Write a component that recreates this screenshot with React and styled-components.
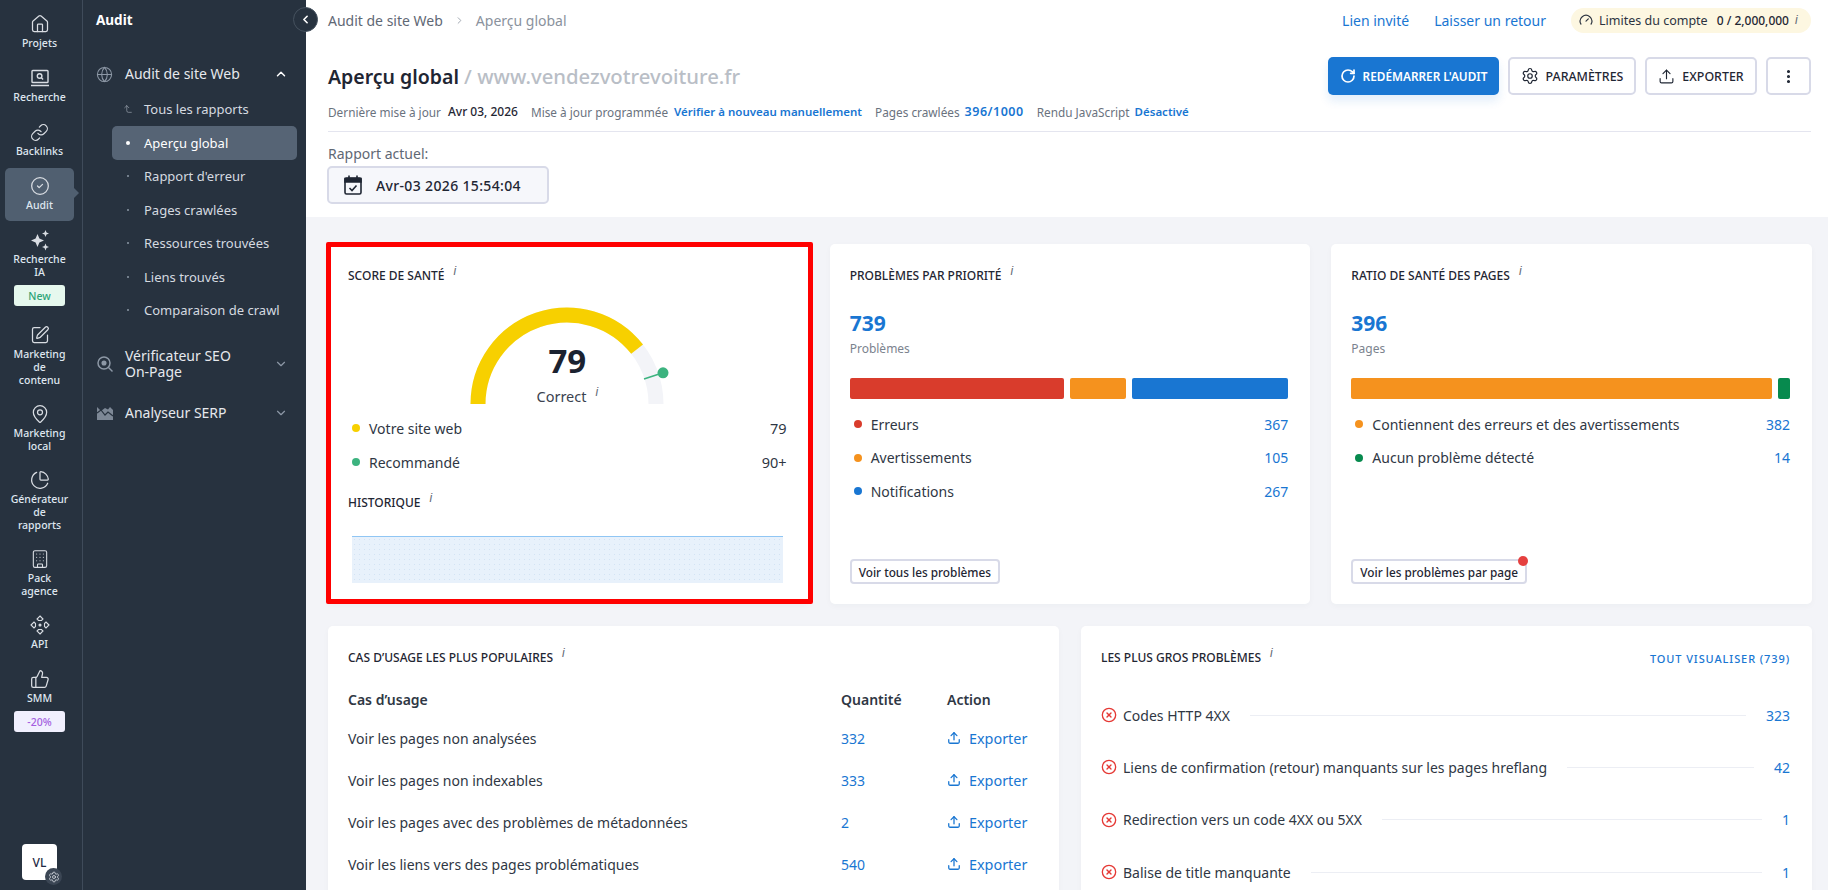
import React from "react";
import styled, { createGlobalStyle } from "styled-components";
import {
  House,
  Link,
  CircleCheck,
  SquarePen,
  MapPin,
  ChartPie,
  Building,
  ThumbsUp,
  Settings,
  Globe,
  ChevronUp,
  ChevronDown,
  ChevronLeft,
  ChevronRight,
  CornerLeftUp,
  Gauge,
  RotateCw,
  Upload,
  EllipsisVertical,
  CircleX,
} from "lucide-react";

const GlobalStyle = createGlobalStyle`
  html, body {
    margin: 0;
    padding: 0;
    height: 890px;
    overflow: hidden;
    background: #f3f4f8;
    font-family: "Noto Sans", "Liberation Sans", sans-serif;
    color: #1f2633;
  }
  * { box-sizing: border-box; }
`;

const Page = styled.div`
  display: flex;
  width: 1828px;
  height: 890px;
  overflow: hidden;
`;

const Rail = styled.nav`
  flex: 0 0 83px;
  display: flex;
  flex-direction: column;
  align-items: flex-start;
  gap: 1px;
  padding: 6px 0 10px 5px;
  background: #27323f;
  border-right: 1px solid #3f4b5a;
`;
const RailItem = styled.div`
  position: relative;
  width: 69px;
  min-height: 53px;
  display: flex;
  flex-direction: column;
  align-items: center;
  padding: 7px 0 8px;
  border-radius: 5px;
  background: ${(p) => (p.$active ? "#505f70" : "transparent")};
  color: #d9dde3;
  ${(p) =>
    p.$active &&
    `&::after {
      content: "";
      position: absolute;
      right: -5px;
      top: 20px;
      border-left: 5px solid #505f70;
      border-top: 5px solid transparent;
      border-bottom: 5px solid transparent;
    }`}
`;
const RailIcon = styled.span`
  height: 22px;
  display: flex;
  align-items: center;
  justify-content: center;
`;
const RailLabel = styled.span`
  margin-top: 2px;
  font-size: 10.5px;
  font-weight: 500;
  line-height: 13px;
  text-align: center;
  color: #dfe6ef;
  white-space: pre-line;
`;
const RailBadge = styled.span`
  width: 51px;
  height: 21px;
  margin-top: 6px;
  margin-bottom: 2px;
  display: flex;
  align-items: center;
  justify-content: center;
  border-radius: 3px;
  font-size: 10.5px;
  font-weight: 500;
  background: ${(p) => (p.$tone === "green" ? "#e6f8ee" : "#f1f0fe")};
  color: ${(p) => (p.$tone === "green" ? "#2fa577" : "#a35ee0")};
`;
const Avatar = styled.div`
  position: relative;
  width: 35px;
  height: 36px;
  margin-top: auto;
  margin-left: 17px;
  display: flex;
  align-items: center;
  justify-content: center;
  border-radius: 4px;
  background: #fff;
  color: #1f2b45;
  font-size: 12px;
  font-weight: 500;
`;
const AvatarGear = styled.span`
  position: absolute;
  right: -5px;
  bottom: -5px;
  width: 17px;
  height: 17px;
  display: flex;
  align-items: center;
  justify-content: center;
  border-radius: 50%;
  background: #3b4654;
  color: #d9dde3;
`;

const SubNav = styled.aside`
  position: relative;
  flex: 0 0 223px;
  display: flex;
  flex-direction: column;
  padding: 0 9px 0 13px;
  background: #27323f;
  color: #dfe3e8;
`;
const SubTitle = styled.div`
  height: 40px;
  display: flex;
  align-items: center;
  font-size: 13.5px;
  font-weight: 700;
  color: #fff;
`;
const CollapseButton = styled.button`
  position: absolute;
  top: 7px;
  right: -12px;
  width: 25px;
  height: 25px;
  padding: 0;
  display: flex;
  align-items: center;
  justify-content: center;
  border: 1px solid #46525f;
  border-radius: 50%;
  background: #27323f;
  color: #fff;
  z-index: 2;
`;
const SectionHead = styled.div`
  display: flex;
  align-items: center;
  min-height: ${(p) => p.$h || 34}px;
  margin-top: ${(p) => p.$mt || 0}px;
  font-size: 14px;
  font-weight: 400;
  line-height: 16px;
  color: #e6e9ed;
`;
const SectionIcon = styled.span`
  flex: 0 0 29px;
  display: flex;
  color: #8d98a6;
`;
const SectionLabel = styled.span`
  flex: 1;
`;
const SectionChevron = styled.span`
  display: flex;
  margin-right: 9px;
  color: ${(p) => (p.$open ? "#fff" : "#8d98a6")};
`;
const SubList = styled.div`
  display: flex;
  flex-direction: column;
  margin-top: 1px;
  margin-left: 16px;
`;
const SubItem = styled.div`
  height: ${(p) => (p.$active ? 34 : 33.5)}px;
  display: flex;
  align-items: center;
  border-radius: 5px;
  background: ${(p) => (p.$active ? "#566475" : "transparent")};
  color: ${(p) => (p.$active ? "#fff" : "#d5dae0")};
  font-size: 13px;
`;
const SubMark = styled.span`
  flex: 0 0 32px;
  display: flex;
  justify-content: center;
  color: #a5adb8;
`;
const SubDot = styled.i`
  width: ${(p) => (p.$active ? 4 : 2)}px;
  height: ${(p) => (p.$active ? 4 : 2)}px;
  border-radius: 50%;
  background: ${(p) => (p.$active ? "#fff" : "#8d98a6")};
`;

const Main = styled.main`
  flex: 1;
  min-width: 0;
  display: flex;
  flex-direction: column;
`;
const Header = styled.header`
  padding: 0 17px 13px 22px;
  background: #fff;
`;
const TopBar = styled.div`
  height: 40px;
  display: flex;
  align-items: center;
  justify-content: space-between;
`;
const Crumbs = styled.div`
  display: flex;
  align-items: center;
  gap: 11px;
  font-size: 14px;
  color: #5f6875;
`;
const CrumbCurrent = styled.span`
  color: #8a929d;
`;
const TopLinks = styled.div`
  display: flex;
  align-items: center;
  gap: 25px;
`;
const TopLink = styled.a`
  color: #1976d2;
  font-size: 14px;
`;
const LimitPill = styled.div`
  width: 240px;
  height: 25px;
  display: flex;
  align-items: center;
  gap: 6px;
  padding: 0 0 0 8px;
  border-radius: 13px;
  background: #fdf7e1;
  font-size: 12.5px;
  color: #2c333f;
`;
const LimitValue = styled.span`
  margin-left: 3px;
  font-size: 12px;
  font-weight: 500;
  color: #1f2633;
`;
const InfoMark = styled.sup`
  font-family: "Liberation Sans", sans-serif;
  font-style: italic;
  font-size: 12px;
  font-weight: 400;
  line-height: 0;
  text-transform: none;
  margin-left: ${(p) => p.$ml ?? 9}px;
  color: #5f6875;
`;
const TitleRow = styled.div`
  height: 38px;
  margin-top: 17px;
  display: flex;
  align-items: center;
  justify-content: space-between;
`;
const PageTitle = styled.h1`
  margin: 0;
  font-size: 19.5px;
  font-weight: 600;
  color: #1f2633;
`;
const TitleSite = styled.span`
  font-size: 20.3px;
  font-weight: 500;
  color: #b9bec6;
`;
const Actions = styled.div`
  display: flex;
  gap: 9px;
`;
const ActionButton = styled.button`
  width: ${(p) => p.$w}px;
  height: 38px;
  display: flex;
  align-items: center;
  justify-content: center;
  gap: 7px;
  padding: 0;
  border-radius: 5px;
  border: ${(p) => (p.$primary ? "none" : "2px solid #d8dae8")};
  background: ${(p) => (p.$primary ? "#1976d2" : "#fff")};
  color: ${(p) => (p.$primary ? "#fff" : "#1f2633")};
  box-shadow: ${(p) => (p.$primary ? "0 6px 10px rgba(25,118,210,.12)" : "none")};
  font-family: inherit;
  font-size: ${(p) => (p.$primary ? 11.8 : 12.4)}px;
  font-weight: ${(p) => (p.$primary ? 600 : 500)};
`;
const MetaRow = styled.div`
  height: 29px;
  margin-top: 8px;
  display: flex;
  align-items: flex-start;
  font-size: 11.8px;
  line-height: 18px;
  border-bottom: 1px solid #e4e5ef;
  color: #6a727e;
`;
const MetaLabel = styled.span`
  margin-left: ${(p) => p.$ml || 0}px;
  margin-right: ${(p) => p.$mr ?? 5}px;
`;
const MetaValue = styled.span`
  font-size: 12px;
  font-weight: 500;
  color: #1f2633;
`;
const MetaLink = styled.span`
  font-size: 11.5px;
  font-weight: 600;
  color: #1976d2;
`;
const MetaCount = styled(MetaLink)`
  font-size: 12.5px;
  letter-spacing: 0.5px;
`;
const ReportLabel = styled.div`
  margin-top: 12px;
  height: 20px;
  font-size: 14px;
  line-height: 20px;
  color: #5f6875;
`;
const DateBox = styled.div`
  width: 222px;
  height: 38px;
  margin: 2px 0 0 -1px;
  display: flex;
  align-items: center;
  gap: 13px;
  padding-left: 14px;
  border: 2px solid #d8dae8;
  border-radius: 5px;
  background: #f6f7fb;
  font-size: 14px;
  font-weight: 500;
  letter-spacing: 0.35px;
  color: #1f2633;
`;

const Content = styled.div`
  display: flex;
  flex-direction: column;
  gap: 22px;
  padding: 27px 16px 0 22px;
`;
const TopGrid = styled.section`
  display: grid;
  grid-template-columns: repeat(3, 1fr);
  gap: 21px;
`;
const BottomGrid = styled.section`
  display: grid;
  grid-template-columns: repeat(2, 1fr);
  gap: 22px;
`;
const Card = styled.article`
  position: relative;
  height: ${(p) => (p.$tall ? 300 : 360)}px;
  display: flex;
  flex-direction: column;
  padding: 24px 22px 20px 20px;
  border-radius: 5px;
  background: #fff;
  box-shadow: 0 2px 6px rgba(40, 50, 70, 0.03);
`;
const Highlight = styled.div`
  position: absolute;
  inset: -2px -4px 0 -2px;
  border: 5px solid #ff0000;
  border-radius: 2px;
  pointer-events: none;
`;
const CardHead = styled.div`
  display: flex;
  align-items: center;
  justify-content: space-between;
`;
const CardTitle = styled.h3`
  margin: ${(p) => p.$mt || 0}px 0 0;
  height: 16px;
  font-size: 12px;
  font-weight: 500;
  line-height: 16px;
  text-transform: uppercase;
  color: #1f2633;
`;
const ViewAll = styled.a`
  font-size: 11px;
  font-weight: 500;
  letter-spacing: 0.9px;
  text-transform: uppercase;
  color: #1976d2;
`;
const GaugeWrap = styled.div`
  position: relative;
  width: 220px;
  height: 100px;
  margin: 20px auto 0;
`;
const GaugeScore = styled.div`
  position: absolute;
  left: 0;
  right: 0;
  bottom: -2px;
  display: flex;
  flex-direction: column;
  align-items: center;
`;
const GaugeNumber = styled.div`
  font-size: 33px;
  font-weight: 700;
  line-height: 36px;
  color: #1b2230;
`;
const GaugeText = styled.div`
  margin-top: 7px;
  font-size: 14.5px;
  line-height: 20px;
  color: #3b4350;
`;
const LegendList = styled.div`
  display: flex;
  flex-direction: column;
  gap: ${(p) => p.$gap ?? 11.5}px;
  margin-top: ${(p) => p.$mt ?? 14}px;
`;
const LegendRow = styled.div`
  height: 22px;
  display: flex;
  align-items: center;
  font-size: 14px;
  color: #2f3744;
`;
const LegendDot = styled.i`
  width: 8px;
  height: 8px;
  margin: 0 9px 0 4px;
  border-radius: 50%;
  background: ${(p) => p.$color};
`;
const LegendValue = styled.span`
  margin-left: auto;
  font-size: ${(p) => (p.$plain ? 14.5 : 14)}px;
  color: ${(p) => (p.$plain ? "#2f3744" : "#1976d2")};
`;
const HistoryChart = styled.div`
  height: 47px;
  margin: 25px 4px 0;
  border-top: 1px solid #90c6f4;
  background-color: #e8f1fb;
  background-image: radial-gradient(#d3e3f4 0.7px, transparent 0.7px);
  background-size: 5px 5px;
`;
const BigNumber = styled.div`
  margin-top: 26px;
  font-size: 21px;
  font-weight: 700;
  line-height: 26px;
  color: #1976d2;
`;
const BigCaption = styled.div`
  margin-top: 4px;
  font-size: 12px;
  line-height: 18px;
  color: #7b838e;
`;
const SplitBar = styled.div`
  height: 21px;
  margin-top: 20px;
  display: flex;
  gap: 6px;
`;
const BarPart = styled.div`
  flex: ${(p) => p.$grow} 1 0;
  border-radius: 2px;
  background: ${(p) => p.$color};
`;
const GhostButton = styled.button`
  position: relative;
  align-self: flex-start;
  height: 25px;
  margin-top: auto;
  padding: 0 7px;
  border: 2px solid #d8dae8;
  border-radius: 4px;
  background: #fff;
  font-family: inherit;
  font-size: 11.8px;
  font-weight: 500;
  color: #1f2633;
`;
const RedDot = styled.i`
  position: absolute;
  top: -5px;
  right: -3px;
  width: 10px;
  height: 10px;
  border-radius: 50%;
  background: #e5403f;
`;
const UseTable = styled.div`
  margin-top: 14px;
  display: grid;
  grid-template-columns: 493px 106px 1fr;
  grid-template-rows: 37px repeat(4, 42px);
  align-items: center;
  font-size: 14px;
  color: #2f3744;
`;
const UseHead = styled.div`
  font-weight: 600;
  color: #2f3744;
  align-self: start;
  line-height: 40px;
`;
const UseCount = styled.a`
  color: #1976d2;
`;
const UseExport = styled.a`
  display: flex;
  align-items: center;
  gap: 8px;
  font-size: 14.4px;
  color: #1976d2;
`;
const ProblemList = styled.div`
  display: flex;
  flex-direction: column;
  margin-top: 23px;
`;
const ProblemRow = styled.div`
  height: 52.3px;
  display: flex;
  align-items: center;
  font-size: 14px;
  color: #2f3744;
`;
const ProblemIcon = styled.span`
  display: flex;
  margin-right: 6px;
  color: #e53935;
`;
const ProblemLine = styled.span`
  flex: 1;
  height: 1px;
  margin: 0 20px;
  background: #eceef4;
`;
const ProblemValue = styled.a`
  color: #1976d2;
`;

const LaptopSearch = () => (
  <svg width="20" height="20" viewBox="0 0 20 20" fill="none" stroke="currentColor" strokeWidth="1.4">
    <rect x="2" y="2.5" width="16" height="12" rx="0.8" />
    <circle cx="9.6" cy="8" r="2.3" />
    <path d="M11.4 9.8l1.7 1.6M1 17.5h18" />
  </svg>
);
const SparkIcon = () => (
  <svg width="22" height="22" viewBox="0 0 22 22" fill="currentColor">
    <path d="M8.5 5L10.4 9.6L15 11.500L10.4 13.400L8.500 18L6.600 13.400L2 11.500L6.600 9.600Z" />
    <path d="M16.500 1L17.500 3.500L20 4.500L17.500 5.500L16.500 8L15.500 5.500L13 4.500L15.500 3.500Z" />
    <path d="M16.500 14.500L17.500 17L20 18L17.500 19L16.500 21.500L15.500 19L13 18L15.500 17Z" />
  </svg>
);
const ApiIcon = () => (
  <svg width="20" height="20" viewBox="0 0 20 20" fill="none" stroke="currentColor" strokeWidth="1.1">
    <path d="M10 1l3 3-1.500 1.500h-3L7 4zM10 19l3-3-1.500-1.500h-3L7 16zM1 10l3-3 1.500 1.500v3L4 13zM19 10l-3-3-1.500 1.500v3L16 13z" />
    <circle cx="10" cy="10" r="1" fill="currentColor" />
  </svg>
);
const SeoIcon = () => (
  <svg width="18" height="18" viewBox="0 0 18 18" fill="none" stroke="currentColor" strokeWidth="1.5">
    <circle cx="8" cy="8" r="6" />
    <circle cx="8" cy="8" r="1.800" fill="currentColor" />
    <path d="M12.500 12.500L16.500 16.500" />
  </svg>
);
const SerpIcon = () => (
  <svg width="18" height="18" viewBox="0 0 18 18" fill="currentColor">
    <path d="M1 3l4 4 4-3 3 1.500L14 3l3 3v10H1z" fillOpacity=".85" />
    <path d="M1 9l4-3 4 5 3-3 5 4" fill="none" stroke="#27323f" strokeWidth="1.200" />
  </svg>
);
const CalendarIcon = () => (
  <svg width="20" height="22" viewBox="0 0 20 22" fill="none" stroke="#1f2633" strokeWidth="1.600">
    <rect x="2" y="4" width="16" height="16" rx="1.500" />
    <path d="M2 4.500h16V8H2z" fill="#1f2633" />
    <path d="M6 1.500v3M14 1.500v3M6.500 14l2.500 2.500 4.500-5" />
  </svg>
);
const HealthGauge = () => (
  <svg width="220" height="100" viewBox="0 0 220 100" fill="none">
    <path d="M21 100A89 89 0 0 1 199 100" stroke="#f3f4f8" strokeWidth="15" />
    <path d="M21 100A89 89 0 0 1 180.100 45.200" stroke="#f7d000" strokeWidth="15" />
    <path d="M187 75L206 68.800" stroke="#3cb37f" strokeWidth="1.600" />
    <circle cx="206" cy="68.800" r="5.500" fill="#3cb37f" />
  </svg>
);

const railItems = [
  { label: "Projets", icon: <House size={20} strokeWidth={1.5} /> },
  { label: "Recherche", icon: <LaptopSearch /> },
  { label: "Backlinks", icon: <Link size={19} strokeWidth={1.5} /> },
  { label: "Audit", icon: <CircleCheck size={20} strokeWidth={1.5} />, active: true },
  { label: "Recherche\nIA", icon: <SparkIcon />, badge: "New", tone: "green" },
  { label: "Marketing\nde\ncontenu", icon: <SquarePen size={20} strokeWidth={1.5} /> },
  { label: "Marketing\nlocal", icon: <MapPin size={20} strokeWidth={1.5} /> },
  { label: "Générateur\nde\nrapports", icon: <ChartPie size={20} strokeWidth={1.5} /> },
  { label: "Pack\nagence", icon: <Building size={20} strokeWidth={1.3} /> },
  { label: "API", icon: <ApiIcon /> },
  { label: "SMM", icon: <ThumbsUp size={20} strokeWidth={1.5} />, badge: "-20%", tone: "violet" },
];

const subItems = [
  "Aperçu global",
  "Rapport d'erreur",
  "Pages crawlées",
  "Ressources trouvées",
  "Liens trouvés",
  "Comparaison de crawl",
];

const useCases = [
  ["Voir les pages non analysées", "332"],
  ["Voir les pages non indexables", "333"],
  ["Voir les pages avec des problèmes de métadonnées", "2"],
  ["Voir les liens vers des pages problématiques", "540"],
];

const problems = [
  ["Codes HTTP 4XX", "323"],
  ["Liens de confirmation (retour) manquants sur les pages hreflang", "42"],
  ["Redirection vers un code 4XX ou 5XX", "1"],
  ["Balise de title manquante", "1"],
];

const App = () => {
  return (
    <Page>
      <GlobalStyle />
      <Rail>
        {railItems.map((item) => (
          <RailItem key={item.label} $active={item.active}>
            <RailIcon>{item.icon}</RailIcon>
            <RailLabel>{item.label}</RailLabel>
            {item.badge && <RailBadge $tone={item.tone}>{item.badge}</RailBadge>}
          </RailItem>
        ))}
        <Avatar>
          VL
          <AvatarGear>
            <Settings size={12} strokeWidth={1.6} />
          </AvatarGear>
        </Avatar>
      </Rail>

      <SubNav>
        <SubTitle>Audit</SubTitle>
        <CollapseButton>
          <ChevronLeft size={13} strokeWidth={3} />
        </CollapseButton>
        <SectionHead $mt={17}>
          <SectionIcon>
            <Globe size={17} strokeWidth={1.5} />
          </SectionIcon>
          <SectionLabel>Audit de site Web</SectionLabel>
          <SectionChevron $open>
            <ChevronUp size={14} strokeWidth={2.5} />
          </SectionChevron>
        </SectionHead>
        <SubList>
          <SubItem>
            <SubMark>
              <CornerLeftUp size={10} strokeWidth={1.5} />
            </SubMark>
            Tous les rapports
          </SubItem>
          {subItems.map((label, index) => (
            <SubItem key={label} $active={index === 0}>
              <SubMark>
                <SubDot $active={index === 0} />
              </SubMark>
              {label}
            </SubItem>
          ))}
        </SubList>
        <SectionHead $h={38} $mt={18}>
          <SectionIcon>
            <SeoIcon />
          </SectionIcon>
          <SectionLabel>
            Vérificateur SEO
            <br />
            On-Page
          </SectionLabel>
          <SectionChevron>
            <ChevronDown size={14} strokeWidth={2} />
          </SectionChevron>
        </SectionHead>
        <SectionHead $mt={13}>
          <SectionIcon>
            <SerpIcon />
          </SectionIcon>
          <SectionLabel>Analyseur SERP</SectionLabel>
          <SectionChevron>
            <ChevronDown size={14} strokeWidth={2} />
          </SectionChevron>
        </SectionHead>
      </SubNav>

      <Main>
        <Header>
          <TopBar>
            <Crumbs>
              <span>Audit de site Web</span>
              <ChevronRight size={11} color="#9aa1ab" />
              <CrumbCurrent>Aperçu global</CrumbCurrent>
            </Crumbs>
            <TopLinks>
              <TopLink>Lien invité</TopLink>
              <TopLink>Laisser un retour</TopLink>
              <LimitPill>
                <Gauge size={14} strokeWidth={2} />
                Limites du compte
                <LimitValue>0 / 2,000,000</LimitValue>
                <InfoMark $ml={0}>i</InfoMark>
              </LimitPill>
            </TopLinks>
          </TopBar>
          <TitleRow>
            <PageTitle>
              Aperçu global <TitleSite>/ www.vendezvotrevoiture.fr</TitleSite>
            </PageTitle>
            <Actions>
              <ActionButton $primary $w={171}>
                <RotateCw size={16} strokeWidth={2.6} />
                REDÉMARRER L'AUDIT
              </ActionButton>
              <ActionButton $w={128}>
                <Settings size={18} strokeWidth={1.6} />
                PARAMÈTRES
              </ActionButton>
              <ActionButton $w={112}>
                <Upload size={17} strokeWidth={1.6} />
                EXPORTER
              </ActionButton>
              <ActionButton $w={45}>
                <EllipsisVertical size={17} strokeWidth={2.4} />
              </ActionButton>
            </Actions>
          </TitleRow>
          <MetaRow>
            <MetaLabel $mr={7}>Dernière mise à jour</MetaLabel>
            <MetaValue>Avr 03, 2026</MetaValue>
            <MetaLabel $ml={13} $mr={6}>
              Mise à jour programmée
            </MetaLabel>
            <MetaLink>Vérifier à nouveau manuellement</MetaLink>
            <MetaLabel $ml={13}>Pages crawlées</MetaLabel>
            <MetaCount>396/1000</MetaCount>
            <MetaLabel $ml={13}>Rendu JavaScript</MetaLabel>
            <MetaLink>Désactivé</MetaLink>
          </MetaRow>
          <ReportLabel>Rapport actuel:</ReportLabel>
          <DateBox>
            <CalendarIcon />
            Avr-03 2026 15:54:04
          </DateBox>
        </Header>

        <Content>
          <TopGrid>
            <Card>
              <Highlight />
              <CardTitle>
                Score de santé<InfoMark>i</InfoMark>
              </CardTitle>
              <GaugeWrap>
                <HealthGauge />
                <GaugeScore>
                  <GaugeNumber>79</GaugeNumber>
                  <GaugeText>
                    Correct<InfoMark>i</InfoMark>
                  </GaugeText>
                </GaugeScore>
              </GaugeWrap>
              <LegendList $gap={12} $mt={13}>
                <LegendRow>
                  <LegendDot $color="#f7d000" />
                  Votre site web
                  <LegendValue $plain>79</LegendValue>
                </LegendRow>
                <LegendRow>
                  <LegendDot $color="#3cb37f" />
                  Recommandé
                  <LegendValue $plain>90+</LegendValue>
                </LegendRow>
              </LegendList>
              <CardTitle $mt={22}>
                Historique<InfoMark>i</InfoMark>
              </CardTitle>
              <HistoryChart />
            </Card>

            <Card>
              <CardTitle>
                Problèmes par priorité<InfoMark>i</InfoMark>
              </CardTitle>
              <BigNumber>739</BigNumber>
              <BigCaption>Problèmes</BigCaption>
              <SplitBar>
                <BarPart $grow={215} $color="#d93c2c" />
                <BarPart $grow={56} $color="#f5921e" />
                <BarPart $grow={156} $color="#1976d2" />
              </SplitBar>
              <LegendList>
                <LegendRow>
                  <LegendDot $color="#d93c2c" />
                  Erreurs
                  <LegendValue>367</LegendValue>
                </LegendRow>
                <LegendRow>
                  <LegendDot $color="#f5921e" />
                  Avertissements
                  <LegendValue>105</LegendValue>
                </LegendRow>
                <LegendRow>
                  <LegendDot $color="#1976d2" />
                  Notifications
                  <LegendValue>267</LegendValue>
                </LegendRow>
              </LegendList>
              <GhostButton>Voir tous les problèmes</GhostButton>
            </Card>

            <Card>
              <CardTitle>
                Ratio de santé des pages<InfoMark>i</InfoMark>
              </CardTitle>
              <BigNumber>396</BigNumber>
              <BigCaption>Pages</BigCaption>
              <SplitBar>
                <BarPart $grow={420} $color="#f5921e" />
                <BarPart $grow={12} $color="#078a4e" />
              </SplitBar>
              <LegendList>
                <LegendRow>
                  <LegendDot $color="#f5921e" />
                  Contiennent des erreurs et des avertissements
                  <LegendValue>382</LegendValue>
                </LegendRow>
                <LegendRow>
                  <LegendDot $color="#078a4e" />
                  Aucun problème détecté
                  <LegendValue>14</LegendValue>
                </LegendRow>
              </LegendList>
              <GhostButton>
                Voir les problèmes par page
                <RedDot />
              </GhostButton>
            </Card>
          </TopGrid>

          <BottomGrid>
            <Card $tall>
              <CardTitle>
                Cas d’usage les plus populaires<InfoMark>i</InfoMark>
              </CardTitle>
              <UseTable>
                <UseHead>Cas d’usage</UseHead>
                <UseHead>Quantité</UseHead>
                <UseHead>Action</UseHead>
                {useCases.map(([label, count]) => (
                  <React.Fragment key={label}>
                    <span>{label}</span>
                    <UseCount>{count}</UseCount>
                    <UseExport>
                      <Upload size={14} strokeWidth={2.2} />
                      Exporter
                    </UseExport>
                  </React.Fragment>
                ))}
              </UseTable>
            </Card>

            <Card $tall>
              <CardHead>
                <CardTitle>
                  Les plus gros problèmes<InfoMark>i</InfoMark>
                </CardTitle>
                <ViewAll>Tout visualiser (739)</ViewAll>
              </CardHead>
              <ProblemList>
                {problems.map(([label, count]) => (
                  <ProblemRow key={label}>
                    <ProblemIcon>
                      <CircleX size={16} strokeWidth={2} />
                    </ProblemIcon>
                    {label}
                    <ProblemLine />
                    <ProblemValue>{count}</ProblemValue>
                  </ProblemRow>
                ))}
              </ProblemList>
            </Card>
          </BottomGrid>
        </Content>
      </Main>
    </Page>
  );
};

export default App;
